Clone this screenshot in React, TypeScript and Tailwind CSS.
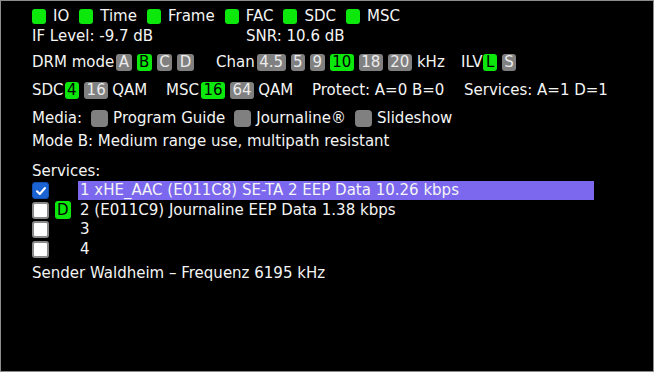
const GREEN = 'bg-[#0ce80c] text-black'
const GRAY = 'bg-[#808080] text-[#ececec]'

interface Chip {
  label: string
  on?: boolean
}

function Led({ label }: { label: string }) {
  return (
    <span className="flex items-center mr-[10px]">
      <span className="w-[14px] h-[15px] rounded-[3px] bg-[#0ce80c]" />
      <span className="ml-[7px]">{label}</span>
    </span>
  )
}

function Chips({ items, first = 2 }: { items: Chip[]; first?: number }) {
  return (
    <>
      {items.map((c, i) => (
        <span
          key={i}
          style={{ marginLeft: i === 0 ? first : 5 }}
          className={`h-[17px] leading-[17px] px-[2.5px] rounded-[3px] ${c.on ? GREEN : GRAY}`}
        >
          {c.label}
        </span>
      ))}
    </>
  )
}

function GrayBox() {
  return <span className="w-[17px] h-[17px] rounded-[4px] bg-[#808080]" />
}

function Check({ checked }: { checked?: boolean }) {
  if (checked) {
    return (
      <span className="w-[17px] h-[17px] rounded-[3px] bg-[#1b62d2] border border-[#1450b0] flex items-center justify-center">
        <svg width="12" height="12" viewBox="0 0 12 12">
          <path d="M2 6.3 L4.8 9 L10 3" fill="none" stroke="white" strokeWidth="2" strokeLinecap="round" strokeLinejoin="round" />
        </svg>
      </span>
    )
  }
  return <span className="w-[17px] h-[17px] rounded-[3px] bg-white border-2 border-[#8a8a8a]" />
}

const services = [
  { text: '1 xHE_AAC (E011C8) SE-TA 2 EEP Data 10.26 kbps', checked: true, sel: true },
  { text: '2 (E011C9) Journaline EEP Data 1.38 kbps', data: true },
  { text: '3' },
  { text: '4' },
]

export default function App() {
  return (
    <div
      className="w-[654px] h-[372px] bg-black border border-[#8c8c8c] pl-[31px] pt-[5px] text-[15px] text-[#f4f4f4] flex flex-col"
      style={{ fontFamily: '"DejaVu Sans", sans-serif' }}
    >
      {/* status leds */}
      <div className="flex items-center h-[20px]">
        {['IO', 'Time', 'Frame', 'FAC', 'SDC', 'MSC'].map((l) => (
          <Led key={l} label={l} />
        ))}
      </div>
      <div className="flex items-center h-[20px]">
        <span className="w-[214px]">IF Level: -9.7 dB</span>
        <span>SNR: 10.6 dB</span>
      </div>

      {/* mode / bandwidth / interleaver */}
      <div className="flex items-center h-[20px] mt-[6px]">
        <span className="w-[184px] flex items-center">
          DRM mode
          <Chips items={[{ label: 'A' }, { label: 'B', on: true }, { label: 'C' }, { label: 'D' }]} />
        </span>
        <span className="w-[245px] flex items-center">
          Chan
          <Chips
            items={[
              { label: '4.5' },
              { label: '5' },
              { label: '9' },
              { label: '10', on: true },
              { label: '18' },
              { label: '20' },
            ]}
          />
          <span className="ml-[5px]">kHz</span>
        </span>
        <span className="flex items-center">
          ILV
          <Chips items={[{ label: 'L', on: true }, { label: 'S' }]} first={1} />
        </span>
      </div>

      <div className="flex items-center h-[21px] mt-[8px]">
        <span className="w-[134px] flex items-center">
          SDC
          <Chips items={[{ label: '4', on: true }, { label: '16' }]} first={1} />
          <span className="ml-[4px]">QAM</span>
        </span>
        <span className="w-[146px] flex items-center">
          MSC
          <Chips items={[{ label: '16', on: true }, { label: '64' }]} first={2} />
          <span className="ml-[4px]">QAM</span>
        </span>
        <span className="w-[152px]">Protect: A=0 B=0</span>
        <span>Services: A=1 D=1</span>
      </div>

      {/* media */}
      <div className="flex items-center h-[20px] mt-[7px]">
        <span className="mr-[9px]">Media:</span>
        <GrayBox />
        <span className="ml-[5px] mr-[9px]">Program Guide</span>
        <GrayBox />
        <span className="ml-[5px] mr-[9px]">Journaline®</span>
        <GrayBox />
        <span className="ml-[5px]">Slideshow</span>
      </div>
      <div className="h-[20px] leading-[20px] mt-[3px]">Mode B: Medium range use, multipath resistant</div>

      {/* services */}
      <div className="h-[19px] leading-[19px] mt-[11px]">Services:</div>
      <div className="flex flex-col">
        {services.map((s, i) => (
          <div key={i} className="flex items-center h-[19.5px]">
            <Check checked={s.checked} />
            <span className="ml-[6px] w-[16px] flex">
              {s.data && <span className={`h-[18px] leading-[18px] px-[2px] rounded-[3px] ${GREEN}`}>D</span>}
            </span>
            <span className={`ml-[7px] w-[516px] h-[19px] leading-[19px] pl-[2px] ${s.sel ? 'bg-[#7b68ee]' : ''}`}>
              {s.text}
            </span>
          </div>
        ))}
      </div>
      <div className="h-[20px] leading-[20px] mt-[4px]">Sender Waldheim – Frequenz 6195 kHz</div>
    </div>
  )
}
